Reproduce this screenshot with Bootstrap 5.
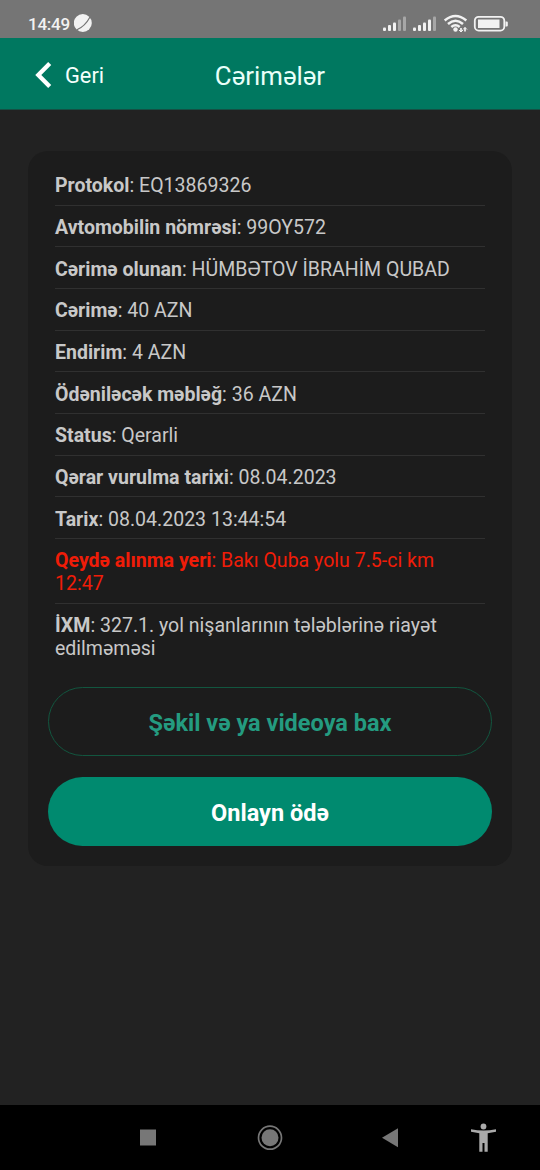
<!DOCTYPE html>
<html lang="az">
<head>
<meta charset="utf-8">
<meta name="viewport" content="width=device-width, initial-scale=1">
<title>Cərimələr</title>
<link href="https://cdn.jsdelivr.net/npm/bootstrap@5.3.0/dist/css/bootstrap.min.css" rel="stylesheet">
<style>
  body { font-family: Roboto, "Noto Sans", sans-serif; background: #222; height: 1170px; overflow: hidden; }
  svg { display: block; }
  .status-bar { height: 38px; background: #757575; color: #f2f2f2; padding: 9px 31px 0 28px; }
  .clock { font-size: 17px; line-height: 30px; font-weight: 500; letter-spacing: -.25px; }
  .app-bar { height: 72px; background: #007860; border-bottom: 1px solid #145044; padding: 4px 0 0; display: grid; grid-template-columns: 1fr auto 1fr; }
  .back-link { font-size: 21.8px; color: #f4fffc; padding-left: 35px; gap: 13px; }
  .back-link span { padding-top: 2px; }
  .back-link svg { margin-top: -2px; }
  .app-title { font-size: 25.8px; line-height: 30px; color: #e9fff9; }
  .fine-card { margin: 41px 28px 0; height: 715px; background: #1c1c1c; border-radius: 20px; padding: 13px 20px 20px; }
  .fine-list { margin: 0 7px; font-size: 19.55px; line-height: 23px; }
  .fine-row { background: transparent; color: #c8c8c8; border: 0; border-bottom: 1px solid #303030; padding: 10.3px 0 7.37px; }
  .fine-row:last-child { border-bottom: 0; }
  .fine-row.is-place { color: #f01c08; }
  .pill { height: 69px; font-size: 23.5px; font-weight: 700; padding: 4px 0 0; }
  .pill-outline { color: #249b80; border: 1px solid #12563f; margin-top: 19.7px; }
  .pill-solid { color: #fff; background: #008a6f; border: 0; margin-top: 21px; }
  .nav-keys { height: 65px; background: #000; }
</style>
</head>
<body class="d-flex flex-column">
<header>
  <div class="status-bar d-flex justify-content-between">
    <div class="d-flex gap-1">
      <span class="clock">14:49</span>
      <svg width="19" height="19" viewBox="0 0 19 19" class="mt-1 pt-0"><circle cx="8.800" cy="10" r="9" fill="#f2f2f2"/><path d="M2.500 17Q11 13.500 16 4" fill="none" stroke="#757575" stroke-width="1.200"/></svg>
    </div>
    <svg width="126" height="28" viewBox="0 0 126 28">
      <g fill="#f2f2f2">
        <rect x="0" y="18.500" width="3" height="3.500" rx="1"/><rect x="5" y="16" width="3" height="6" rx="1"/><rect x="10" y="13.500" width="3" height="8.500" rx="1"/>
        <rect x="15" y="10.500" width="3" height="11.500" rx="1" opacity=".4"/><rect x="20" y="7.500" width="3" height="14.500" rx="1" opacity=".4"/>
        <rect x="30" y="18.500" width="3" height="3.500" rx="1"/><rect x="35" y="16" width="3" height="6" rx="1"/><rect x="40" y="13.500" width="3" height="8.500" rx="1"/>
        <rect x="45" y="10.500" width="3" height="11.500" rx="1"/><rect x="50" y="7.500" width="3" height="14.500" rx="1" opacity=".4"/>
        <circle cx="72.500" cy="20.500" r="2.200"/>
      </g>
      <g fill="none" stroke="#f2f2f2" stroke-width="2.500">
        <path d="M61.700 11.500Q72.500 2.500 83.300 11.500M65 15Q72.500 8.500 80 15M68.300 18Q72.500 14.500 76.700 18"/>
        <path d="M78 23v-4M82 18.500v4" stroke-width="1.700"/><path d="M76 21l2 2 2-2M80 20.500l2-2 2 2" stroke-width="1"/>
        <rect x="91.800" y="7.800" width="29.500" height="13.800" rx="3.800" stroke-width="1.800"/>
      </g>
      <path d="M95 10.400h21.500v8.600H95zM122.500 12.500h1.300q1 0 1 1v3q0 1-1 1h-1.300z" fill="#f2f2f2"/>
    </svg>
  </div>
  <nav class="app-bar align-items-center">
    <a href="#" class="back-link d-flex align-items-center text-decoration-none">
      <svg width="17" height="28" viewBox="0 0 17 28"><path d="M14.700 2.500L3.300 14l11.400 11.500" fill="none" stroke="#fff" stroke-width="4.300"/></svg>
      <span>Geri</span>
    </a>
    <h1 class="app-title fw-normal m-0">Cərimələr</h1>
  </nav>
</header>
<main class="flex-grow-1">
  <section class="fine-card">
    <ul class="fine-list list-group list-group-flush">
      <li class="fine-row list-group-item"><b>Protokol</b>: EQ13869326</li>
      <li class="fine-row list-group-item"><b>Avtomobilin nömrəsi</b>: 99OY572</li>
      <li class="fine-row list-group-item"><b>Cərimə olunan</b>: HÜMBƏTOV İBRAHİM QUBAD</li>
      <li class="fine-row list-group-item"><b>Cərimə</b>: 40 AZN</li>
      <li class="fine-row list-group-item"><b>Endirim</b>: 4 AZN</li>
      <li class="fine-row list-group-item"><b>Ödəniləcək məbləğ</b>: 36 AZN</li>
      <li class="fine-row list-group-item"><b>Status</b>: Qerarli</li>
      <li class="fine-row list-group-item"><b>Qərar vurulma tarixi</b>: 08.04.2023</li>
      <li class="fine-row list-group-item"><b>Tarix</b>: 08.04.2023 13:44:54</li>
      <li class="fine-row list-group-item is-place"><b>Qeydə alınma yeri</b>: Bakı Quba yolu 7.5-ci km<br>12:47</li>
      <li class="fine-row list-group-item"><b>İXM</b>: 327.1. yol nişanlarının tələblərinə riayət<br>edilməməsi</li>
    </ul>
    <button type="button" class="pill pill-outline btn rounded-pill w-100 d-block">Şəkil və ya videoya bax</button>
    <button type="button" class="pill pill-solid btn rounded-pill w-100 d-block">Onlayn ödə</button>
  </section>
</main>
<footer class="nav-keys">
  <svg width="540" height="65" viewBox="0 0 540 65">
    <path d="M140 24.500h16v16h-16z" fill="#777"/>
    <circle cx="270" cy="32.700" r="8.500" fill="#777"/><circle cx="270" cy="32.700" r="11.500" fill="none" stroke="#777" stroke-width="1.700"/>
    <path d="M382 32.700L398 23.300v19z" fill="#777"/>
    <g fill="#aaa"><circle cx="483.500" cy="21.500" r="2.900"/><path d="M471 24.300q12.500 2.400 25 0v2.500l-8.300 1.400v18.500h-3.200v-8.600h-2v8.600h-3.200V28.200l-8.300-1.400z"/></g>
  </svg>
</footer>
<script src="https://cdn.jsdelivr.net/npm/bootstrap@5.3.0/dist/js/bootstrap.bundle.min.js"></script>
</body>
</html>
